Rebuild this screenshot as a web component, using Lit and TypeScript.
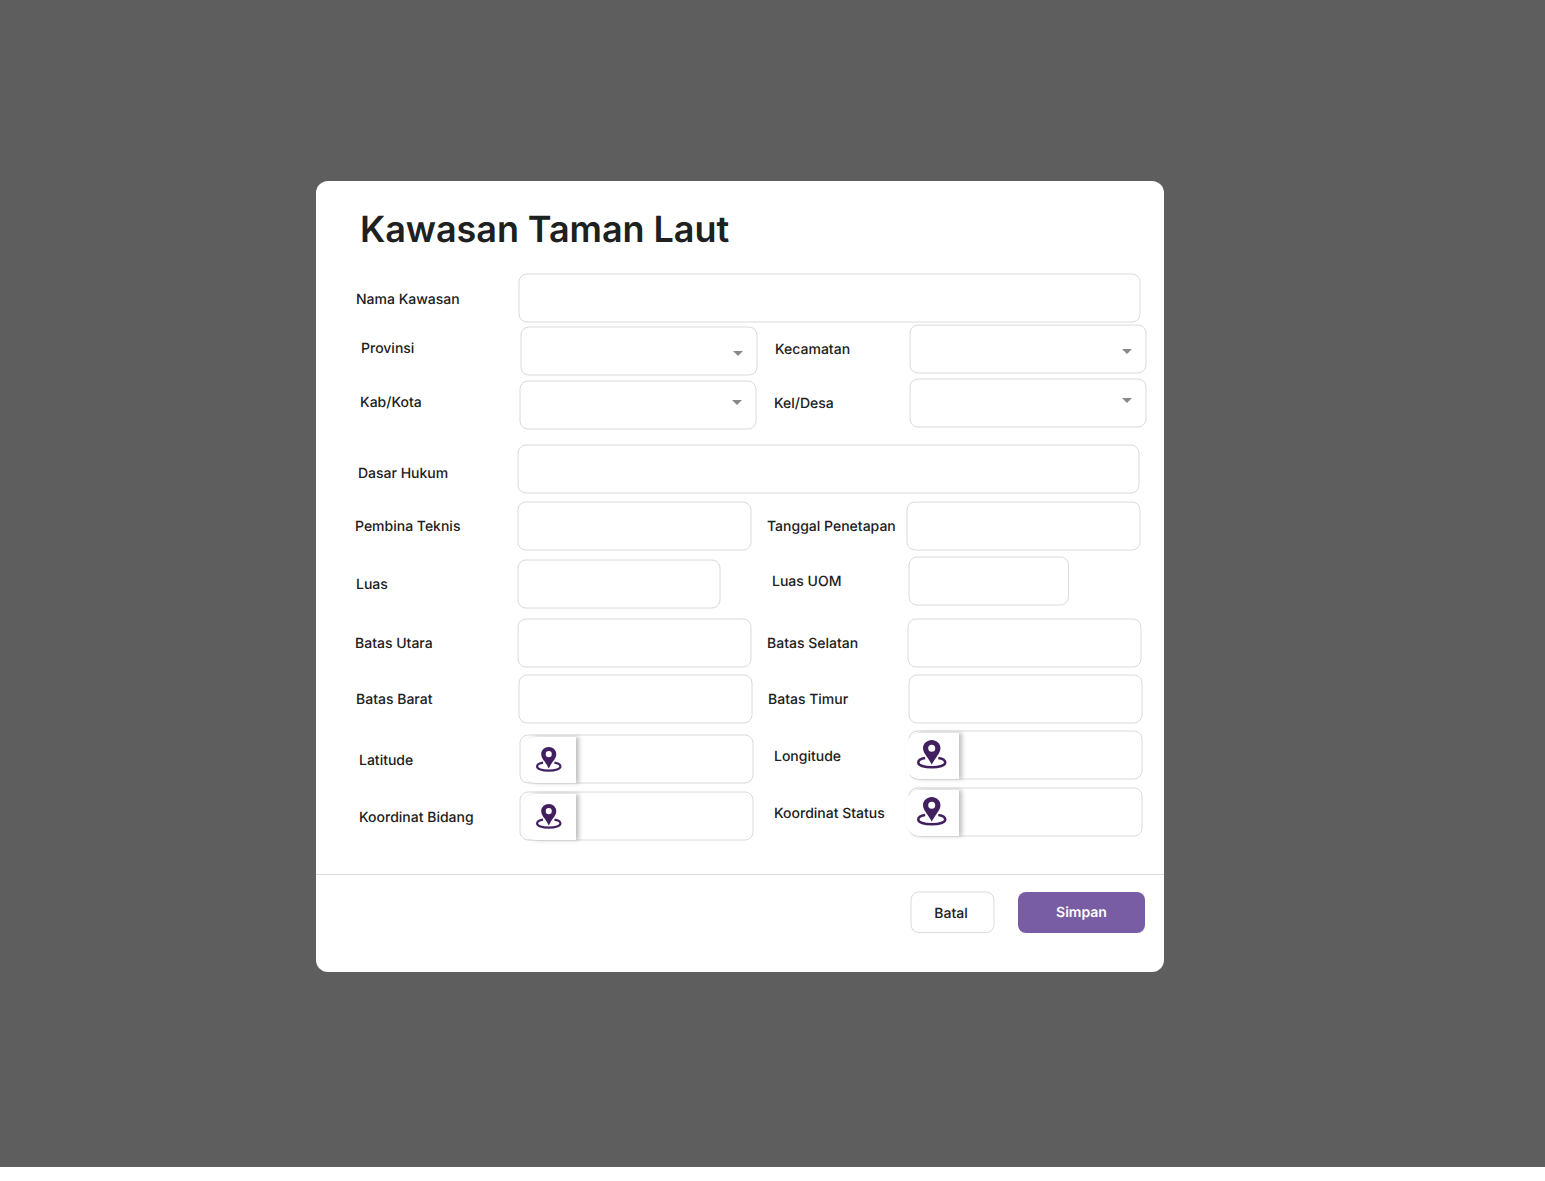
import { LitElement, html, css, svg, nothing } from "lit";
import { customElement, property } from "lit/decorators.js";

type Kind = "text" | "select" | "geo";

interface Field {
  id: string;
  label: string;
  kind: Kind;
}

const ROWS: Field[][] = [
  [{ id: "nama", label: "Nama Kawasan", kind: "text" }],
  [
    { id: "provinsi", label: "Provinsi", kind: "select" },
    { id: "kecamatan", label: "Kecamatan", kind: "select" },
  ],
  [
    { id: "kab", label: "Kab/Kota", kind: "select" },
    { id: "kel", label: "Kel/Desa", kind: "select" },
  ],
  [{ id: "dasar", label: "Dasar Hukum", kind: "text" }],
  [
    { id: "pembina", label: "Pembina Teknis", kind: "text" },
    { id: "tanggal", label: "Tanggal Penetapan", kind: "text" },
  ],
  [
    { id: "luas", label: "Luas", kind: "text" },
    { id: "uom", label: "Luas UOM", kind: "text" },
  ],
  [
    { id: "utara", label: "Batas Utara", kind: "text" },
    { id: "selatan", label: "Batas Selatan", kind: "text" },
  ],
  [
    { id: "barat", label: "Batas Barat", kind: "text" },
    { id: "timur", label: "Batas Timur", kind: "text" },
  ],
  [
    { id: "latitude", label: "Latitude", kind: "geo" },
    { id: "longitude", label: "Longitude", kind: "geo" },
  ],
  [
    { id: "bidang", label: "Koordinat Bidang", kind: "geo" },
    { id: "status", label: "Koordinat Status", kind: "geo" },
  ],
];

@customElement("form-box")
class FormBox extends LitElement {
  @property() kind: Kind = "text";

  static styles = css`
    :host {
      display: block;
      position: relative;
      height: 50px;
    }
    .frame {
      display: block;
      width: 100%;
      height: 100%;
    }
    .outline {
      width: calc(100% - 2px);
      height: calc(100% - 2px);
      fill: #fff;
      stroke: #dadada;
      stroke-width: 1;
    }
    .caret {
      position: absolute;
      right: 15px;
      top: var(--caret-top, 25px);
      width: 10px;
      height: 5px;
      fill: #898989;
    }
    .pin-box {
      position: absolute;
      left: var(--pin-left, 3px);
      top: 3px;
      width: var(--pin-width, 54px);
      height: 46px;
      border-radius: 14px 0 0 14px;
      background: #fff;
      box-shadow: 3px 0 4px rgba(0, 0, 0, 0.25);
    }
    .pin {
      position: absolute;
      left: var(--icon-left, 14px);
      top: var(--icon-top, 10px);
      width: var(--icon-size, 25.5px);
      height: var(--icon-size, 25.5px);
      color: #42205f;
    }
  `;

  render() {
    return html`
      <svg class="frame">
        <rect class="outline" x="1" y="1" rx="8" ry="8"></rect>
      </svg>
      ${this.kind === "select"
        ? html`<svg class="caret" viewBox="0 0 10 5"><path d="M0 0H10L5 5Z" /></svg>`
        : nothing}
      ${this.kind === "geo"
        ? html`<div class="pin-box">
            <svg class="pin" viewBox="0 0 26 26">
              ${svg`
                <path fill="currentColor" fill-rule="evenodd"
                  d="M13 0C8.7 0 5.3 3.2 5.3 7.3C5.3 10 7 12.4 8.8 14.9C10.4 17.2 12 19.5 13 21.8C14 19.5 15.6 17.2 17.2 14.9C19 12.4 20.7 10 20.7 7.3C20.7 3.2 17.3 0 13 0ZM13 4.2A3.1 3.1 0 1 1 13 10.4A3.1 3.1 0 1 1 13 4.2Z" />
                <path fill="none" stroke="currentColor" stroke-width="2.2"
                  d="M7.2 15.9C3.5 16.5 1.1 18 1.1 19.8C1.1 22.3 6.2 24.1 13 24.1C19.8 24.1 24.9 22.3 24.9 19.8C24.9 18 22.5 16.5 18.8 15.9" />
              `}
            </svg>
          </div>`
        : nothing}
    `;
  }
}

@customElement("app-root")
class AppRoot extends LitElement {
  static styles = css`
    :host {
      display: block;
      height: 1181px;
      background: #fff;
      font-family: Inter, "Liberation Sans", sans-serif;
      color: #202020;
      text-rendering: geometricPrecision;
    }
    .backdrop {
      box-sizing: border-box;
      height: 1167px;
      padding: 181px 0 0 316px;
      background: #5e5e5e;
    }
    .dialog {
      display: flex;
      flex-direction: column;
      width: 848px;
      height: 791px;
      border-radius: 12px;
      background: #fff;
      overflow: hidden;
    }
    .title {
      margin: 26px 0 0 44px;
      height: 44px;
      line-height: 44px;
      font-size: 36px;
      font-weight: 600;
      letter-spacing: -0.06px;
      white-space: nowrap;
    }
    .rows {
      flex: 1;
      padding: 22px 0 0 39px;
    }
    .row {
      display: grid;
      grid-template-columns: 162px 250px 139px 1fr;
      height: 50px;
    }
    .label {
      height: 22px;
      padding-top: 15px;
      line-height: 22px;
      font-size: 14px;
      font-weight: 500;
      white-space: nowrap;
    }
    .field {
      width: 235px;
    }

    .row-provinsi { margin-top: 1px; }
    .row-kab { margin-top: 4px; }
    .row-dasar { margin-top: 16px; }
    .row-pembina { margin-top: 7px; }
    .row-luas { margin-top: 5px; }
    .row-utara { margin-top: 12px; }
    .row-barat { margin-top: 6px; }
    .row-latitude { margin-top: 6px; }
    .row-bidang { margin-top: 7px; }

    .label-nama { padding-left: 1px; padding-top: 16px; }
    .label-provinsi { padding-left: 6px; padding-top: 14px; }
    .label-kecamatan { padding-left: 8px; }
    .label-kab { padding-left: 5px; padding-top: 14px; }
    .label-kel { padding-left: 7px; }
    .label-dasar { padding-left: 3px; padding-top: 19px; }
    .label-luas { padding-left: 1px; padding-top: 18px; }
    .label-uom { padding-left: 5px; }
    .label-barat { padding-left: 1px; }
    .label-timur { padding-left: 1px; }
    .label-latitude { padding-left: 4px; padding-top: 20px; }
    .label-longitude { padding-left: 7px; padding-top: 16px; }
    .label-bidang { padding-left: 4px; padding-top: 20px; }
    .label-status { padding-left: 7px; padding-top: 16px; }

    .field-nama { width: 623px; margin-left: 1px; }
    .field-dasar { width: 623px; }
    .field-provinsi { width: 238px; margin: 2px 0 0 3px; }
    .field-kecamatan { width: 238px; margin-left: 3px; }
    .field-kab { width: 238px; margin: 2px 0 0 2px; --caret-top: 20px; }
    .field-kel { width: 238px; margin-left: 3px; --caret-top: 20px; }
    .field-luas { width: 204px; margin-top: 3px; }
    .field-uom { width: 161.5px; margin-left: 2px; }
    .field-selatan { margin-left: 1px; }
    .field-barat { margin-left: 1px; }
    .field-timur { margin-left: 2px; }
    .field-latitude,
    .field-bidang { margin: 4px 0 0 2px; }
    .field-longitude,
    .field-status {
      margin-left: 2px;
      --pin-left: -2px;
      --pin-width: 53px;
      --icon-left: 11px;
      --icon-top: 7px;
      --icon-size: 29.5px;
    }

    .footer {
      display: flex;
      align-items: flex-start;
      justify-content: flex-end;
      gap: 23px;
      box-sizing: border-box;
      height: 98px;
      padding: 16px 19px 0 0;
      border-top: 1px solid #dadada;
    }
    .button {
      box-sizing: border-box;
      border: 0;
      border-radius: 8px;
      font-family: inherit;
      font-size: 14px;
      line-height: 20px;
      text-align: center;
      text-rendering: inherit;
    }
    .cancel {
      display: grid;
      width: 85px;
      height: 43px;
      padding: 0;
      background: none;
      color: #202020;
      font-weight: 500;
    }
    .cancel-frame,
    .cancel-text {
      grid-area: 1 / 1;
    }
    .cancel-frame {
      display: block;
      width: 85px;
      height: 43px;
    }
    .cancel-outline {
      fill: #fff;
      stroke: #dadada;
    }
    .cancel-text {
      padding: 13px 3px 0 0;
    }
    .save {
      width: 127px;
      height: 40.5px;
      margin-top: 1px;
      padding: 1px 0 0;
      background: #785da4;
      color: #fff;
      font-weight: 600;
    }
  `;

  private renderField(f: Field) {
    return html`
      <div class="label label-${f.id}">${f.label}</div>
      <form-box class="field field-${f.id}" .kind=${f.kind}></form-box>
    `;
  }

  render() {
    return html`
      <div class="backdrop">
        <section class="dialog">
          <h1 class="title">Kawasan Taman Laut</h1>
          <div class="rows">
            ${ROWS.map(
              (row) => html`<div class="row row-${row[0].id}">
                ${row.map((f) => this.renderField(f))}
              </div>`
            )}
          </div>
          <footer class="footer">
            <button class="button cancel">
              <svg class="cancel-frame">
                <rect class="cancel-outline" x="1" y="1" width="83" height="40.6" rx="8"></rect>
              </svg>
              <span class="cancel-text">Batal</span>
            </button>
            <button class="button save">Simpan</button>
          </footer>
        </section>
      </div>
    `;
  }
}
